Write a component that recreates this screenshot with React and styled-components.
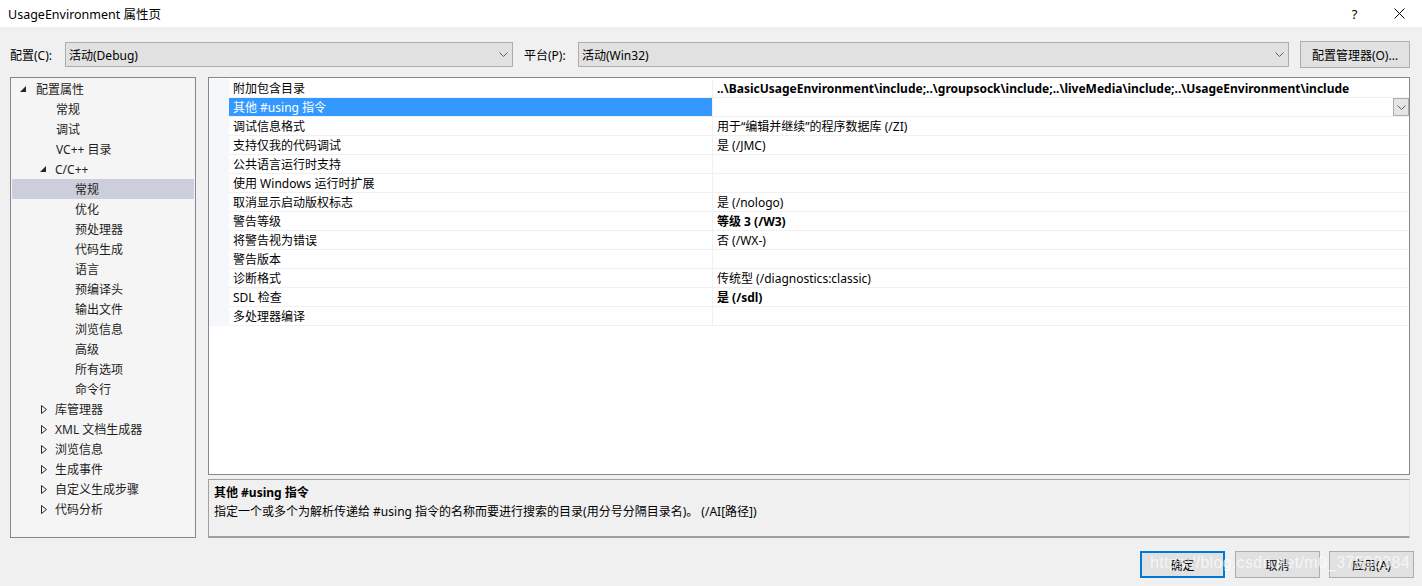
import styled, { createGlobalStyle } from "styled-components";

const GlobalStyle = createGlobalStyle`
  html, body { margin: 0; padding: 0; }
  body {
    width: 1422px;
    height: 586px;
    overflow: hidden;
    background: #f0f0f0;
    font-family: "Noto Sans", "Noto Sans CJK SC", sans-serif;
    font-size: 12px;
    color: #000;
  }
`;

const Window = styled.div`
  width: 1422px;
  height: 586px;
  display: flex;
  flex-direction: column;
  position: relative;
`;

const TitleBar = styled.div`
  height: 27px;
  background: #fff;
  display: flex;
  align-items: center;
  padding-left: 8px;
  font-size: 12.5px;
`;

const TitleText = styled.div`
  flex: 1;
`;

const TitleBtn = styled.div`
  width: 45px;
  height: 27px;
  display: flex;
  align-items: center;
  justify-content: center;
  font-size: 13px;
`;

const Body = styled.div`
  flex: 1;
  display: flex;
  flex-direction: column;
  padding: 14px 12px 0 10px;
`;

const ConfigRow = styled.div`
  display: flex;
  align-items: center;
  height: 27px;
`;

const Label = styled.span`
  width: ${(p) => p.w}px;
  white-space: nowrap;
`;

const Combo = styled.div`
  width: ${(p) => p.w}px;
  height: 25px;
  box-sizing: border-box;
  border: 1px solid #adadad;
  background: #e1e1e1;
  display: flex;
  align-items: center;
  padding-left: 3px;
  margin-right: ${(p) => p.mr || 0}px;
`;

const ComboText = styled.span`
  flex: 1;
`;

const Chevron = ({ color = "#606060" }) => (
  <svg width="9" height="5" viewBox="0 0 9 5" style={{ marginRight: 4 }}>
    <polyline points="0.5,0.5 4.5,4.5 8.5,0.5" fill="none" stroke={color} strokeWidth="1" />
  </svg>
);

const Button = styled.div`
  width: ${(p) => p.w}px;
  height: 27px;
  box-sizing: border-box;
  border: ${(p) => (p.primary ? "2px solid #0078d7" : "1px solid #adadad")};
  background: #e1e1e1;
  display: flex;
  align-items: center;
  justify-content: center;
  margin-left: ${(p) => p.ml || 0}px;
`;

const Main = styled.div`
  display: flex;
  margin-top: 9px;
  height: 461px;
`;

const Tree = styled.div`
  width: 186px;
  box-sizing: border-box;
  border: 1px solid #828790;
  background: #f5f5f5;
  padding: 1px 1px;
  display: flex;
  flex-direction: column;
`;

const TreeRow = styled.div`
  height: 20px;
  display: flex;
  align-items: center;
  padding-left: ${(p) => p.indent}px;
  background: ${(p) => (p.selected ? "#cccedb" : "transparent")};
  color: #1e1e1e;
  white-space: nowrap;
`;

const Arrow = styled.span`
  width: ${(p) => p.w}px;
  display: inline-flex;
  align-items: center;
`;

const Expanded = () => (
  <svg width="6" height="6" viewBox="0 0 6 6">
    <polygon points="6,0 6,6 0,6" fill="#262626" />
  </svg>
);

const Collapsed = () => (
  <svg width="6" height="9" viewBox="0 0 6 9">
    <polygon points="0.5,0.5 5.5,4.5 0.5,8.5" fill="none" stroke="#262626" strokeWidth="1" />
  </svg>
);

const Right = styled.div`
  flex: 1;
  margin-left: 12px;
  display: flex;
  flex-direction: column;
`;

const Grid = styled.div`
  height: 398px;
  box-sizing: border-box;
  border: 1px solid #828790;
  background: #fff;
  display: flex;
  flex-direction: column;
  padding-top: 1px;
`;

const GridRow = styled.div`
  height: 19px;
  display: flex;
  box-sizing: border-box;
`;

const Gutter = styled.div`
  width: 20px;
  background: #f5f7fa;
`;

const NameCell = styled.div`
  width: 484px;
  box-sizing: border-box;
  padding-left: 4px;
  display: flex;
  align-items: center;
  border-bottom: 1px solid #f0f0f0;
  border-right: 1px solid #f0f0f0;
  background: ${(p) => (p.selected ? "#3399ff" : "#fff")};
  color: ${(p) => (p.selected ? "#fff" : "#000")};
  white-space: nowrap;
`;

const ValueCell = styled.div`
  flex: 1;
  box-sizing: border-box;
  padding-left: 4px;
  display: flex;
  align-items: center;
  border-bottom: 1px solid #f0f0f0;
  font-weight: ${(p) => (p.bold ? 700 : 400)};
  white-space: nowrap;
  overflow: hidden;
`;

const DropBtn = styled.div`
  margin-left: auto;
  width: 16px;
  height: 18px;
  box-sizing: border-box;
  border: 1px solid #adadad;
  background: #e5e5e5;
  display: flex;
  align-items: center;
  justify-content: center;
  svg { margin: 0 !important; }
`;

const GridFill = styled.div`
  flex: 1;
  display: flex;
`;

const Desc = styled.div`
  margin-top: 4px;
  flex: 1;
  box-sizing: border-box;
  border: 1px solid #a0a0a0;
  border-right-color: #e3e3e3;
  border-bottom: 2px solid #a0a0a0;
  background: #f0f0f0;
  padding: 3px 5px;
  line-height: 19px;
`;

const DescTitle = styled.div`
  font-weight: 700;
`;

const Footer = styled.div`
  display: flex;
  justify-content: flex-end;
  margin-top: 13px;
  margin-right: -4px;
`;

const Watermark = styled.div`
  position: absolute;
  left: 1150px;
  top: 554px;
  font-family: "Liberation Sans", Arial, sans-serif;
  font-size: 16px;
  color: rgba(255, 255, 255, 0.7);
  letter-spacing: 0.3px;
  pointer-events: none;
`;

const tree = [
  { t: "配置属性", indent: 8, arrow: "exp", aw: 16 },
  { t: "常规", indent: 44 },
  { t: "调试", indent: 44 },
  { t: "VC++ 目录", indent: 44 },
  { t: "C/C++", indent: 28, arrow: "exp", aw: 15 },
  { t: "常规", indent: 63, selected: true },
  { t: "优化", indent: 63 },
  { t: "预处理器", indent: 63 },
  { t: "代码生成", indent: 63 },
  { t: "语言", indent: 63 },
  { t: "预编译头", indent: 63 },
  { t: "输出文件", indent: 63 },
  { t: "浏览信息", indent: 63 },
  { t: "高级", indent: 63 },
  { t: "所有选项", indent: 63 },
  { t: "命令行", indent: 63 },
  { t: "库管理器", indent: 29, arrow: "col", aw: 14 },
  { t: "XML 文档生成器", indent: 29, arrow: "col", aw: 14 },
  { t: "浏览信息", indent: 29, arrow: "col", aw: 14 },
  { t: "生成事件", indent: 29, arrow: "col", aw: 14 },
  { t: "自定义生成步骤", indent: 29, arrow: "col", aw: 14 },
  { t: "代码分析", indent: 29, arrow: "col", aw: 14 },
];

const props = [
  {
    n: "附加包含目录",
    v: "..\\BasicUsageEnvironment\\include;..\\groupsock\\include;..\\liveMedia\\include;..\\UsageEnvironment\\include",
    bold: true,
  },
  { n: "其他 #using 指令", v: "", selected: true },
  { n: "调试信息格式", v: "用于“编辑并继续”的程序数据库 (/ZI)" },
  { n: "支持仅我的代码调试", v: "是 (/JMC)" },
  { n: "公共语言运行时支持", v: "" },
  { n: "使用 Windows 运行时扩展", v: "" },
  { n: "取消显示启动版权标志", v: "是 (/nologo)" },
  { n: "警告等级", v: "等级 3 (/W3)", bold: true },
  { n: "将警告视为错误", v: "否 (/WX-)" },
  { n: "警告版本", v: "" },
  { n: "诊断格式", v: "传统型 (/diagnostics:classic)" },
  { n: "SDL 检查", v: "是 (/sdl)", bold: true },
  { n: "多处理器编译", v: "" },
];

export default function App() {
  return (
    <Window>
      <GlobalStyle />
      <TitleBar>
        <TitleText>UsageEnvironment 属性页</TitleText>
        <TitleBtn>?</TitleBtn>
        <TitleBtn>
          <svg width="11" height="11" viewBox="0 0 11 11">
            <path d="M0.5 0.5 L10.5 10.5 M10.5 0.5 L0.5 10.5" stroke="#000" strokeWidth="1" />
          </svg>
        </TitleBtn>
      </TitleBar>
      <Body>
        <ConfigRow>
          <Label w={55}>配置(C):</Label>
          <Combo w={448} mr={11}>
            <ComboText>活动(Debug)</ComboText>
            <Chevron />
          </Combo>
          <Label w={54}>平台(P):</Label>
          <Combo w={711} mr={11}>
            <ComboText>活动(Win32)</ComboText>
            <Chevron />
          </Combo>
          <Button w={110}>配置管理器(O)...</Button>
        </ConfigRow>
        <Main>
          <Tree>
            {tree.map((r, i) => (
              <TreeRow key={i} indent={r.indent} selected={r.selected}>
                {r.arrow && <Arrow w={r.aw}>{r.arrow === "exp" ? <Expanded /> : <Collapsed />}</Arrow>}
                {r.t}
              </TreeRow>
            ))}
          </Tree>
          <Right>
            <Grid>
              {props.map((p, i) => (
                <GridRow key={i}>
                  <Gutter />
                  <NameCell selected={p.selected}>{p.n}</NameCell>
                  <ValueCell bold={p.bold}>
                    {p.v}
                    {p.selected && (
                      <DropBtn>
                        <Chevron />
                      </DropBtn>
                    )}
                  </ValueCell>
                </GridRow>
              ))}
              <GridFill />
            </Grid>
            <Desc>
              <DescTitle>其他 #using 指令</DescTitle>
              <div>指定一个或多个为解析传递给 #using 指令的名称而要进行搜索的目录(用分号分隔目录名)。 (/AI[路径])</div>
            </Desc>
          </Right>
        </Main>
        <Footer>
          <Button w={85} primary>确定</Button>
          <Button w={85} ml={10}>取消</Button>
          <Button w={85} ml={9}>应用(A)</Button>
        </Footer>
      </Body>
      <Watermark>https://blog.csdn.net/m0_37590384</Watermark>
    </Window>
  );
}
